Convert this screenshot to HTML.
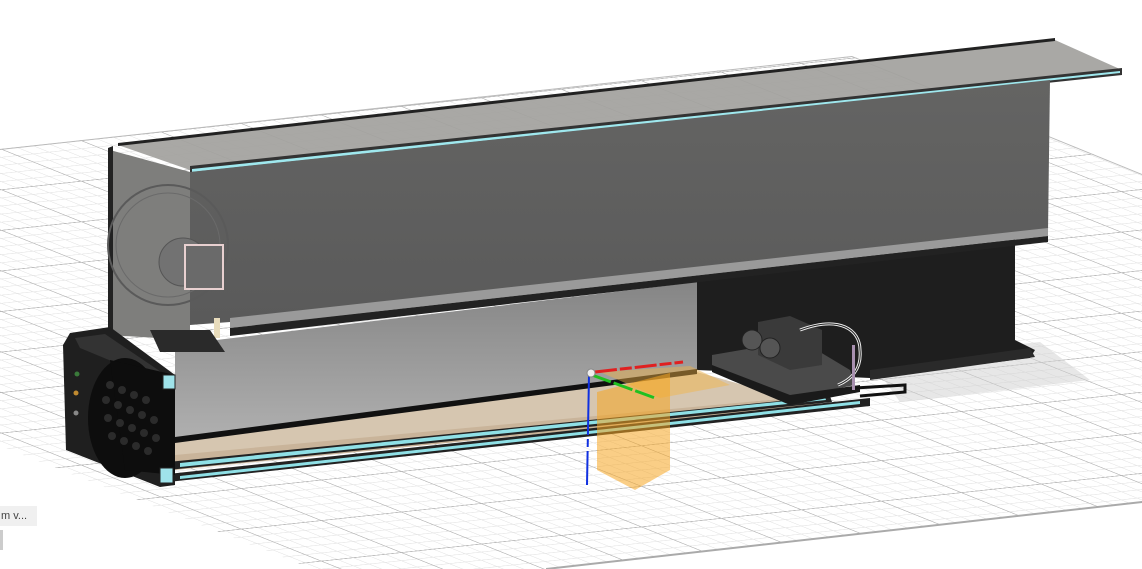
<!DOCTYPE html>
<html><head><meta charset="utf-8"><style>
html,body{margin:0;padding:0;background:#fff;width:1142px;height:569px;overflow:hidden}
svg{display:block}
.lbl{position:absolute;left:0;top:506px;width:36px;height:20px;background:#f0f0f0;font:11px "Liberation Sans",sans-serif;color:#444;line-height:20px;padding-left:1px}
</style></head><body>
<svg width="1142" height="569" viewBox="0 0 1142 569">
<defs>
<pattern id="gmin" width="16" height="16" patternUnits="userSpaceOnUse" patternTransform="matrix(1 -0.107 1 0.4 0 149)">
<path d="M0 0.5H16M0.5 0V16" stroke="#e4e4e4" stroke-width="1.3" fill="none"/>
</pattern>
<pattern id="gmaj" width="80" height="80" patternUnits="userSpaceOnUse" patternTransform="matrix(1 -0.107 1 0.4 0 149)">
<path d="M0 0.5H80M0.5 0V80" stroke="#b8b8b8" stroke-width="1.8" fill="none"/>
</pattern>
<clipPath id="gc"><polygon points="0,149 852,56 1142,174 1142,502 546,569 313,569 0,446"/></clipPath>
<linearGradient id="face" x1="0" y1="0" x2="0" y2="1">
<stop offset="0" stop-color="#646463"/><stop offset="1" stop-color="#5a5a5a"/></linearGradient>
<linearGradient id="wall" x1="0" y1="0" x2="0" y2="1">
<stop offset="0" stop-color="#858585"/><stop offset="1" stop-color="#b0b0b0"/></linearGradient>
</defs>
<g clip-path="url(#gc)">
<rect width="1142" height="569" fill="url(#gmin)"/>
<rect width="1142" height="569" fill="url(#gmaj)"/>
</g>
<polygon points="0,149 852,56 1142,174 1142,175 852,57 0,150" fill="#bbb"/>
<polygon points="1142,501 546,568 546,570 1142,503" fill="#aaa"/>
<!-- shadow right -->
<polygon points="870,360 1040,342 1090,380 900,402" fill="#d0d0d0" opacity="0.5"/>
<!-- black block behind -->
<polygon points="697,282 1015,232 1015,340 1035,350 1030,358 870,378 697,370" fill="#1e1e1e"/>
<polygon points="870,370 1030,348 1035,357 870,380" fill="#2a2a2a"/>
<!-- tray back wall -->
<polygon points="175,345 697,282 697,372 175,440" fill="url(#wall)"/>
<!-- tray floor -->
<polygon points="175,452 790,398 830,405 175,470" fill="#c9b49a"/>
<polygon points="175,440 697,372 790,398 175,455" fill="#d6c6b0"/>
<polygon points="175,437 697,369 697,374 175,443" fill="#111"/>
<!-- front strips -->
<polygon points="168,462 830,396 832,402 168,470" fill="#222"/>
<polygon points="180,463 825,397 826,400 180,467" fill="#8fe0e6"/>
<polygon points="168,474 870,398 870,406 168,482" fill="#222"/>
<polygon points="180,476 860,401 860,404 180,479" fill="#8fe0e6"/>
<!-- top flange -->
<polygon points="118,145 1055,40 1122,70 190,170" fill="#a2a19d" opacity="0.92"/>
<polygon points="118,143 1055,38 1055,41 118,146" fill="#222"/>
<polygon points="190,166 1122,68 1122,75 190,174" fill="#333"/>
<polygon points="192,169 1120,71 1120,73 192,172" fill="#9fe8ee"/>
<!-- front face -->
<polygon points="190,172 1050,80 1048,232 230,322 190,325" fill="url(#face)"/>
<polygon points="230,318 1048,228 1048,236 230,328" fill="#9a9a9a"/>
<polygon points="230,328 1048,236 1048,242 230,336" fill="#222"/>
<!-- fan area -->
<polygon points="110,150 190,172 190,340 108,335" fill="#7e7e7c"/>
<polygon points="108,148 113,146 113,335 108,335" fill="#222"/>
<circle cx="168" cy="245" r="60" fill="none" stroke="#5a5a5a" stroke-width="2"/>
<circle cx="168" cy="245" r="52" fill="none" stroke="#6a6a6a" stroke-width="1"/>
<circle cx="183" cy="262" r="24" fill="#727272" stroke="#555"/>
<rect x="185" y="245" width="38" height="44" fill="#6a6a6a" stroke="#e8d0d0" stroke-width="2"/>
<rect x="214" y="318" width="6" height="20" fill="#e8dcbc"/>
<polygon points="150,330 210,330 225,352 160,352" fill="#2a2a2a"/>
<!-- end cap -->
<polygon points="70,333 110,327 175,375 175,485 160,487 66,450 63,345" fill="#1f1f1f"/>
<polygon points="75,338 105,334 170,378 172,386 80,348" fill="#333"/>
<ellipse cx="125" cy="418" rx="37" ry="60" fill="#0d0d0d"/>
<polygon points="110,360 175,375 175,475 125,470" fill="#0d0d0d"/>
<g fill="#2b2b2b">
<circle cx="110" cy="385" r="4"/><circle cx="122" cy="390" r="4"/><circle cx="134" cy="395" r="4"/><circle cx="146" cy="400" r="4"/>
<circle cx="106" cy="400" r="4"/><circle cx="118" cy="405" r="4"/><circle cx="130" cy="410" r="4"/><circle cx="142" cy="415" r="4"/><circle cx="154" cy="420" r="4"/>
<circle cx="108" cy="418" r="4"/><circle cx="120" cy="423" r="4"/><circle cx="132" cy="428" r="4"/><circle cx="144" cy="433" r="4"/><circle cx="156" cy="438" r="4"/>
<circle cx="112" cy="436" r="4"/><circle cx="124" cy="441" r="4"/><circle cx="136" cy="446" r="4"/><circle cx="148" cy="451" r="4"/>
</g>
<circle cx="77" cy="374" r="2.5" fill="#3a7a3a"/>
<circle cx="76" cy="393" r="2.5" fill="#c08a30"/>
<circle cx="76" cy="413" r="2.5" fill="#888"/>
<rect x="163" y="375" width="12" height="14" fill="#9fe3ea" stroke="#222"/>
<rect x="160" y="468" width="13" height="15" fill="#9fe3ea" stroke="#222"/>
<!-- electronics -->
<polygon points="712,355 800,340 850,370 855,385 790,398 712,368" fill="#4a4a4a"/>
<polygon points="712,365 790,395 860,385 860,392 790,405 712,372" fill="#1a1a1a"/>
<polygon points="758,322 790,316 822,330 822,365 790,370 758,355" fill="#3a3a3a"/>
<circle cx="752" cy="340" r="10" fill="#555" stroke="#222"/>
<circle cx="770" cy="348" r="10" fill="#555" stroke="#222"/>
<path d="M800 330 C840 315 860 330 860 350 C862 370 850 380 838 385" fill="none" stroke="#eee" stroke-width="3"/>
<path d="M800 330 C840 315 860 330 860 350 C862 370 850 380 838 385" fill="none" stroke="#222" stroke-width="1"/>
<rect x="852" y="345" width="3" height="45" fill="#a890b0"/>
<path d="M855 388 L905 385 L905 392 L860 396" fill="none" stroke="#111" stroke-width="3"/>
<!-- orange planes -->
<polygon points="600,372 690,366 730,385 660,398" fill="#f5b445" opacity="0.45"/>
<polygon points="597,392 670,373 670,470 635,490 597,470" fill="#f5a623" opacity="0.55"/>
<!-- axes -->
<line x1="595" y1="372" x2="683" y2="362" stroke="#e02020" stroke-width="3" stroke-dasharray="22,3,12,3"/>
<line x1="592" y1="375" x2="655" y2="398" stroke="#20c020" stroke-width="3" stroke-dasharray="20,3"/>
<line x1="589" y1="375" x2="587" y2="485" stroke="#1030e0" stroke-width="2" stroke-dasharray="60,4,8,4"/>
<circle cx="591" cy="373" r="4" fill="#eee" stroke="#888"/>
<rect x="0" y="530" width="3" height="20" fill="#ccc"/>
</svg>
<div class="lbl">m v...</div>
</body></html>
